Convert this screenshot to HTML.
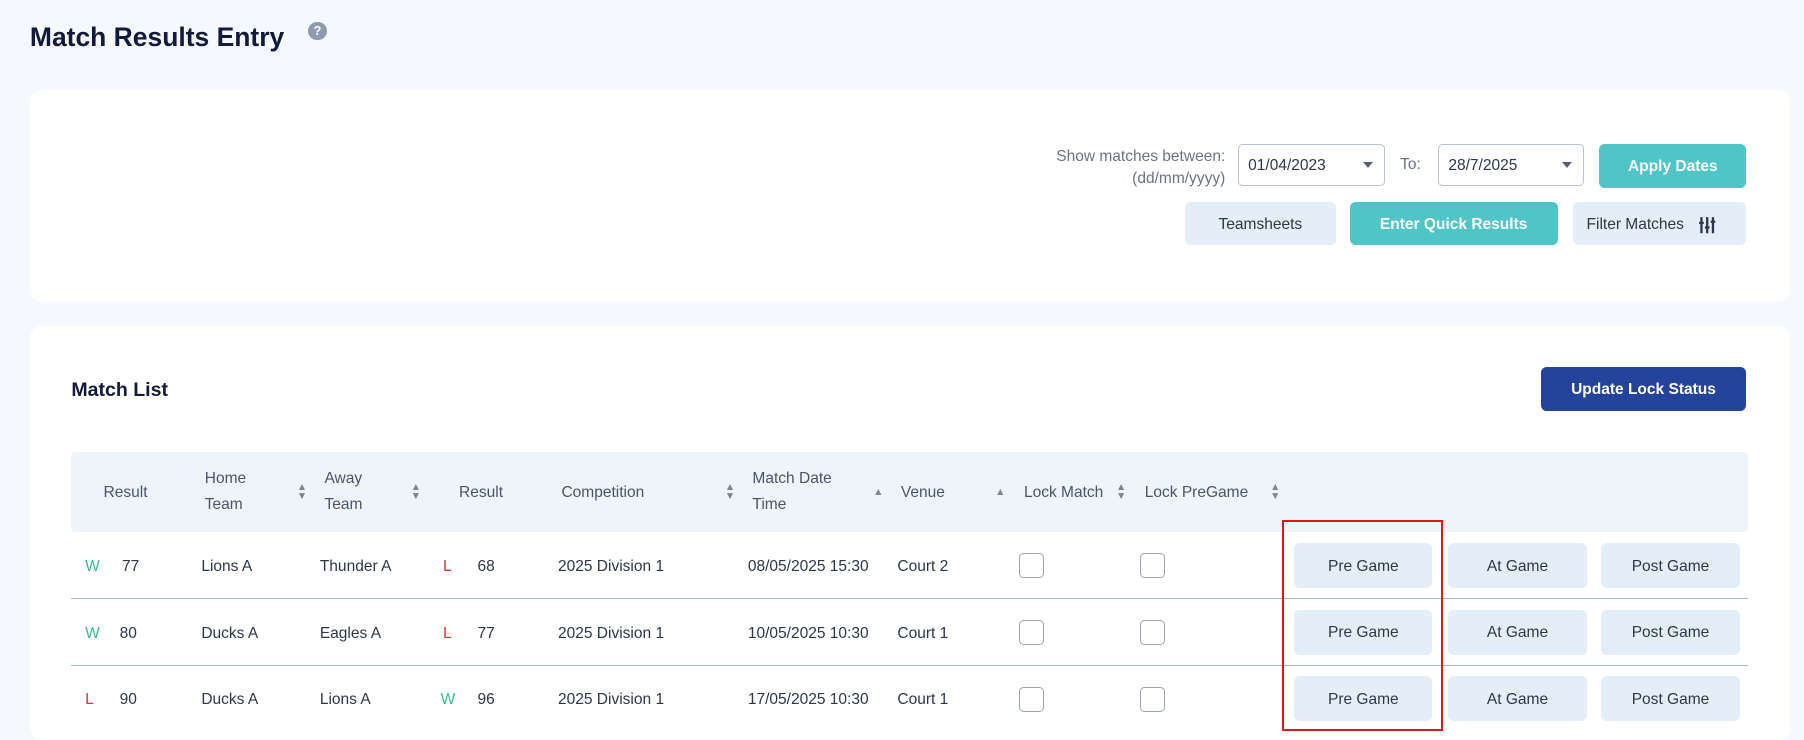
<!DOCTYPE html>
<html><head><meta charset="utf-8"><style>
html,body{margin:0;padding:0}
body{width:1568px;height:635px;overflow:hidden;background:#f5f8fc;font-family:"Liberation Sans",sans-serif;zoom:1.1505;position:relative}
.a{position:absolute}
.card{background:#fff;border-radius:10px}
.btn{position:absolute;border-radius:5px;display:flex;align-items:center;justify-content:center;font-size:13.5px;padding-top:2px;box-sizing:border-box}
.lt{background:#e3eef9;color:#2d3748}
.teal{background:#4fc5c7;color:#fff;font-weight:bold}
.sel{position:absolute;border:1px solid #b9c3cf;border-radius:4px;background:#fff;height:37px;font-size:13.5px;color:#2d3748;line-height:37px;padding-left:8px;box-sizing:border-box}
.sel:after{content:"";position:absolute;right:10px;top:15px;border-left:5px solid transparent;border-right:5px solid transparent;border-top:6px solid #5a6272}
.h{position:absolute;font-size:13.5px;color:#4a5568;line-height:23px}
.s{position:absolute;font-size:9px;color:#7a8494;line-height:8px}
.t{position:absolute;font-size:13.5px;color:#2d3748}
.cb{position:absolute;width:20px;height:20px;border:1px solid #9aa4b2;border-radius:4px;background:#fff}
.sep{position:absolute;left:62px;width:1457px;height:1px;background:#aab6c4}
</style></head><body>
<div class="a" style="left:26px;top:19px;font-size:23px;font-weight:bold;color:#111a3a">Match Results Entry</div>
<div class="a" style="left:268px;top:19px;width:16px;height:16px;border-radius:50%;background:#8e9aae;color:#fff;font-size:11px;font-weight:bold;text-align:center;line-height:16px">?</div>

<div class="a card" style="left:26px;top:78px;width:1530px;height:184px"></div>
<div class="a" style="left:860px;top:127px;width:205px;text-align:right;font-size:13.5px;color:#6b7383;line-height:19px">Show matches between:<br>(dd/mm/yyyy)</div>
<div class="sel" style="left:1076px;top:125px;width:128px">01/04/2023</div>
<div class="a" style="left:1217px;top:136px;font-size:13.5px;color:#6b7383">To:</div>
<div class="sel" style="left:1250px;top:125px;width:127px">28/7/2025</div>
<div class="btn teal" style="left:1390px;top:125px;width:128px;height:38px">Apply Dates</div>
<div class="btn lt" style="left:1030px;top:176px;width:131px;height:37px">Teamsheets</div>
<div class="btn teal" style="left:1173px;top:176px;width:181px;height:37px">Enter Quick Results</div>
<div class="btn lt" style="left:1367px;top:176px;width:151px;height:37px;justify-content:flex-start;padding-left:12px">Filter Matches
<svg width="16" height="16" viewBox="0 0 16 16" style="margin-left:12px" stroke="#2d3748" stroke-width="2" fill="none"><path d="M3 1v14M8 1v14M13 1v14M1 6h4M6 10h4M11 5h4"/></svg></div>

<div class="a card" style="left:26px;top:283px;width:1530px;height:360px"></div>
<div class="a" style="left:62px;top:329px;font-size:17px;font-weight:bold;color:#111a3a">Match List</div>
<div class="btn" style="left:1339px;top:319px;width:179px;height:38px;background:#24449b;color:#fff;font-weight:bold">Update Lock Status</div>

<div class="a" style="left:62px;top:393px;width:1457px;height:69px;background:#eef4fa;border-radius:4px"></div>
<div class="h" style="left:90px;top:417px">Result</div>
<div class="h" style="left:178px;top:405px">Home<br>Team</div><div class="s" style="left:258px;top:420px">▲<br>▼</div>
<div class="h" style="left:282px;top:405px">Away<br>Team</div><div class="s" style="left:357px;top:420px">▲<br>▼</div>
<div class="h" style="left:399px;top:417px">Result</div>
<div class="h" style="left:488px;top:417px">Competition</div><div class="s" style="left:630px;top:420px">▲<br>▼</div>
<div class="h" style="left:654px;top:405px">Match Date<br>Time</div><div class="s" style="left:759px;top:424px">▲</div>
<div class="h" style="left:783px;top:417px">Venue</div><div class="s" style="left:865px;top:424px">▲</div>
<div class="h" style="left:890px;top:417px">Lock Match</div><div class="s" style="left:970px;top:420px">▲<br>▼</div>
<div class="h" style="left:995px;top:417px">Lock PreGame</div><div class="s" style="left:1104px;top:420px">▲<br>▼</div>

<div class="t" style="left:74px;top:485px;color:#3cb893">W</div><div class="t" style="left:106px;top:485px">77</div>
<div class="t" style="left:175px;top:485px">Lions A</div><div class="t" style="left:278px;top:485px">Thunder A</div>
<div class="t" style="left:385px;top:485px;color:#e0302e">L</div><div class="t" style="left:415px;top:485px">68</div>
<div class="t" style="left:485px;top:485px">2025 Division 1</div><div class="t" style="left:650px;top:485px">08/05/2025 15:30</div><div class="t" style="left:780px;top:485px">Court 2</div>
<div class="cb" style="left:886px;top:481px"></div><div class="cb" style="left:991px;top:481px"></div>
<div class="btn lt" style="left:1125px;top:472px;width:120px;height:39px">Pre Game</div>
<div class="btn lt" style="left:1259px;top:472px;width:120px;height:39px">At Game</div>
<div class="btn lt" style="left:1392px;top:472px;width:120px;height:39px">Post Game</div>
<div class="sep" style="top:520px"></div>

<div class="t" style="left:74px;top:543px;color:#3cb893">W</div><div class="t" style="left:104px;top:543px">80</div>
<div class="t" style="left:175px;top:543px">Ducks A</div><div class="t" style="left:278px;top:543px">Eagles A</div>
<div class="t" style="left:385px;top:543px;color:#e0302e">L</div><div class="t" style="left:415px;top:543px">77</div>
<div class="t" style="left:485px;top:543px">2025 Division 1</div><div class="t" style="left:650px;top:543px">10/05/2025 10:30</div><div class="t" style="left:780px;top:543px">Court 1</div>
<div class="cb" style="left:886px;top:539px"></div><div class="cb" style="left:991px;top:539px"></div>
<div class="btn lt" style="left:1125px;top:530px;width:120px;height:39px">Pre Game</div>
<div class="btn lt" style="left:1259px;top:530px;width:120px;height:39px">At Game</div>
<div class="btn lt" style="left:1392px;top:530px;width:120px;height:39px">Post Game</div>
<div class="sep" style="top:578px"></div>

<div class="t" style="left:74px;top:601px;color:#e0302e">L</div><div class="t" style="left:104px;top:601px">90</div>
<div class="t" style="left:175px;top:601px">Ducks A</div><div class="t" style="left:278px;top:601px">Lions A</div>
<div class="t" style="left:383px;top:601px;color:#3cb893">W</div><div class="t" style="left:415px;top:601px">96</div>
<div class="t" style="left:485px;top:601px">2025 Division 1</div><div class="t" style="left:650px;top:601px">17/05/2025 10:30</div><div class="t" style="left:780px;top:601px">Court 1</div>
<div class="cb" style="left:886px;top:597px"></div><div class="cb" style="left:991px;top:597px"></div>
<div class="btn lt" style="left:1125px;top:588px;width:120px;height:39px">Pre Game</div>
<div class="btn lt" style="left:1259px;top:588px;width:120px;height:39px">At Game</div>
<div class="btn lt" style="left:1392px;top:588px;width:120px;height:39px">Post Game</div>

<div class="a" style="left:1114px;top:452px;width:137px;height:180px;border:2px solid #e0161d"></div>
</body></html>
